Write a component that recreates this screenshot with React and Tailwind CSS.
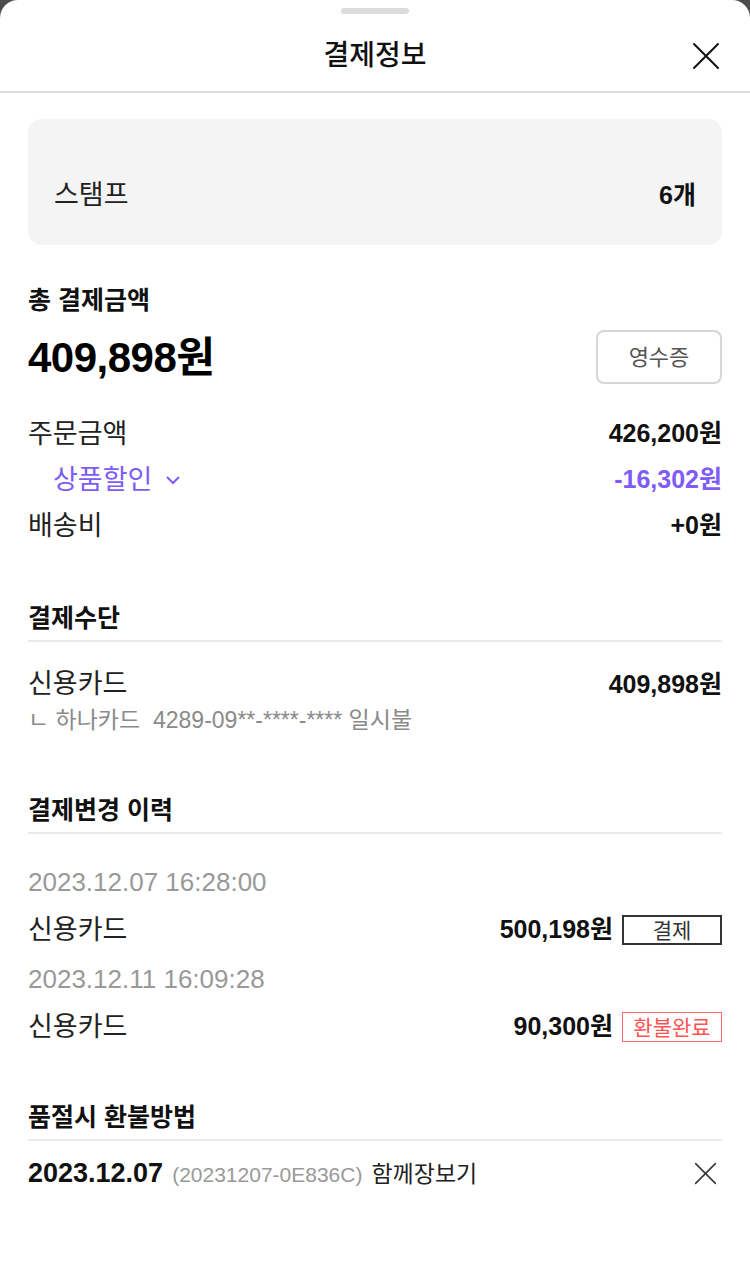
import React from 'react';

const font = { fontFamily: '"Liberation Sans", "Noto Sans CJK KR", sans-serif' };

const CloseIcon = ({ size = 28, stroke = 2, color = '#111' }) => (
  <svg width={size} height={size} viewBox="0 0 28 28" fill="none">
    <path d="M2 2L26 26M26 2L2 26" stroke={color} strokeWidth={stroke} strokeLinecap="round" />
  </svg>
);

const SectionTitle = ({ children, className = '' }) => (
  <div className={`border-b-2 border-[#ebebeb] pb-[8px] ${className}`}>
    <h3 className="text-[25px] leading-[28px] font-bold text-[#111]">{children}</h3>
  </div>
);

const AmountRow = ({ label, value, valueClass = 'text-[#111]' }) => (
  <div className="flex items-center justify-between h-[46px]">
    {label}
    <span className={`text-[25px] font-bold ${valueClass}`}>{value}</span>
  </div>
);

const historyRows = [
  { date: '2023.12.07 16:28:00', method: '신용카드', amount: '500,198원', status: '결제', refund: false },
  { date: '2023.12.11 16:09:28', method: '신용카드', amount: '90,300원', status: '환불완료', refund: true },
];

export default function App() {
  return (
    <div className="w-[750px] min-h-[1276px] bg-[#4d4d4d]" style={font}>
      <div className="bg-white rounded-t-[18px] min-h-[1276px] pb-10">
        <div className="pt-2 flex justify-center">
          <div className="w-[68px] h-[6px] rounded-full bg-[#dcdcdc]" />
        </div>
        <div className="relative h-[79px] flex items-center justify-center pt-[6px] border-b-2 border-[#d9dcdf]">
          <h1 className="text-[28px] font-medium text-[#111]">결제정보</h1>
          <button className="absolute right-[30px] top-[28px]">
            <CloseIcon />
          </button>
        </div>

        <div className="px-7">
          <div className="mt-[26px] h-[126px] rounded-[14px] bg-[#f4f4f4] px-[26px] pt-[61px]">
            <div className="flex items-center justify-between leading-[30px]">
              <span className="text-[27px] text-[#222]">스탬프</span>
              <span className="text-[25px] font-bold text-[#111]">6개</span>
            </div>
          </div>

          <h3 className="mt-[41px] text-[25px] leading-[28px] font-bold text-[#111]">총 결제금액</h3>
          <div className="mt-[16px] flex items-center justify-between h-[54px]">
            <span className="text-[42px] font-bold text-black tracking-[-0.5px]">409,898원</span>
            <button className="w-[126px] h-[54px] rounded-[8px] border-2 border-[#d6d6d6] text-[22px] text-[#555]">
              영수증
            </button>
          </div>

          <div className="mt-[27px]">
            <AmountRow label={<span className="text-[27px] text-[#222]">주문금액</span>} value="426,200원" />
            <AmountRow
              label={
                <span className="pl-[25px] flex items-center gap-[13px] text-[27px] text-[#7d5cf7]">
                  상품할인
                  <svg width="16" height="10" viewBox="0 0 16 10" fill="none">
                    <path d="M2 2L8 8L14 2" stroke="#7d5cf7" strokeWidth="2" />
                  </svg>
                </span>
              }
              value="-16,302원"
              valueClass="text-[#7d5cf7]"
            />
            <AmountRow label={<span className="text-[27px] text-[#222]">배송비</span>} value="+0원" />
          </div>

          <SectionTitle className="mt-[55px]">결제수단</SectionTitle>
          <div className="mt-[28px] flex items-center justify-between leading-[28px]">
            <span className="text-[27px] text-[#222]">신용카드</span>
            <span className="text-[25px] font-bold text-[#111]">409,898원</span>
          </div>
          <p className="mt-[8px] leading-[28px] text-[23px] text-[#8a8a8a]">
            ㄴ 하나카드&nbsp;&nbsp;4289-09**-****-**** 일시불
          </p>

          <SectionTitle className="mt-[62px]">결제변경 이력</SectionTitle>
          <div className="mt-[34px]">
            {historyRows.map((row, i) => (
              <div key={row.date} className={i > 0 ? 'mt-[20px]' : ''}>
                <p className="leading-[28px] text-[26px] text-[#999]">{row.date}</p>
                <div className="mt-[19px] h-[30px] flex items-center justify-between">
                  <span className="text-[27px] text-[#222]">{row.method}</span>
                  <div className="flex items-center gap-[9px]">
                    <span className="text-[25px] font-bold text-[#111]">{row.amount}</span>
                    <span
                      className={`w-[100px] h-[30px] flex items-center justify-center text-[21px] leading-none ${
                        row.refund
                          ? 'border-[1.5px] border-[#ff6b6b] text-[#ff5454]'
                          : 'border-2 border-[#333] text-[#333]'
                      }`}
                    >
                      {row.status}
                    </span>
                  </div>
                </div>
              </div>
            ))}
          </div>

          <SectionTitle className="mt-[61px]">품절시 환불방법</SectionTitle>
          <div className="mt-[18px] h-[28px] flex items-center justify-between">
            <div className="flex items-baseline gap-[9px]">
              <span className="text-[27px] font-bold text-[#111]">2023.12.07</span>
              <span className="text-[21px] text-[#999]">(20231207-0E836C)</span>
              <span className="text-[23px] text-[#222]">함께장보기</span>
            </div>
            <button className="mr-[5px]">
              <CloseIcon size={23} stroke={1.8} color="#333" />
            </button>
          </div>
        </div>
      </div>
    </div>
  );
}
